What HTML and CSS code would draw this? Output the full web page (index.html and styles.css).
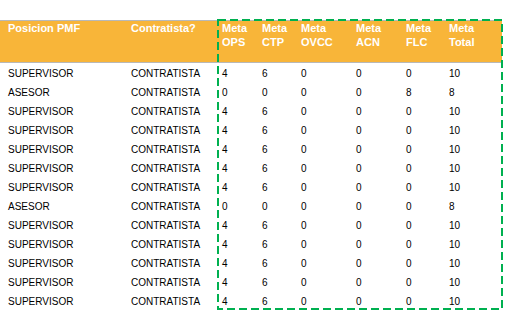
FILE: index.html
```html
<!DOCTYPE html>
<html>
<head>
<meta charset="utf-8">
<link rel="stylesheet" href="styles.css">
</head>
<body>
<div class="sheet">
  <div class="row head">
    <div>Posicion PMF</div>
    <div>Contratista?</div>
    <div>Meta<br>OPS</div>
    <div>Meta<br>CTP</div>
    <div>Meta<br>OVCC</div>
    <div>Meta<br>ACN</div>
    <div>Meta<br>FLC</div>
    <div>Meta<br>Total</div>
  </div>
  <div class="body">
    <div class="row"><div>SUPERVISOR</div><div>CONTRATISTA</div><div>4</div><div>6</div><div>0</div><div>0</div><div>0</div><div>10</div></div>
    <div class="row"><div>ASESOR</div><div>CONTRATISTA</div><div>0</div><div>0</div><div>0</div><div>0</div><div>8</div><div>8</div></div>
    <div class="row"><div>SUPERVISOR</div><div>CONTRATISTA</div><div>4</div><div>6</div><div>0</div><div>0</div><div>0</div><div>10</div></div>
    <div class="row"><div>SUPERVISOR</div><div>CONTRATISTA</div><div>4</div><div>6</div><div>0</div><div>0</div><div>0</div><div>10</div></div>
    <div class="row"><div>SUPERVISOR</div><div>CONTRATISTA</div><div>4</div><div>6</div><div>0</div><div>0</div><div>0</div><div>10</div></div>
    <div class="row"><div>SUPERVISOR</div><div>CONTRATISTA</div><div>4</div><div>6</div><div>0</div><div>0</div><div>0</div><div>10</div></div>
    <div class="row"><div>SUPERVISOR</div><div>CONTRATISTA</div><div>4</div><div>6</div><div>0</div><div>0</div><div>0</div><div>10</div></div>
    <div class="row"><div>ASESOR</div><div>CONTRATISTA</div><div>0</div><div>0</div><div>0</div><div>0</div><div>0</div><div>8</div></div>
    <div class="row"><div>SUPERVISOR</div><div>CONTRATISTA</div><div>4</div><div>6</div><div>0</div><div>0</div><div>0</div><div>10</div></div>
    <div class="row"><div>SUPERVISOR</div><div>CONTRATISTA</div><div>4</div><div>6</div><div>0</div><div>0</div><div>0</div><div>10</div></div>
    <div class="row"><div>SUPERVISOR</div><div>CONTRATISTA</div><div>4</div><div>6</div><div>0</div><div>0</div><div>0</div><div>10</div></div>
    <div class="row"><div>SUPERVISOR</div><div>CONTRATISTA</div><div>4</div><div>6</div><div>0</div><div>0</div><div>0</div><div>10</div></div>
    <div class="row"><div>SUPERVISOR</div><div>CONTRATISTA</div><div>4</div><div>6</div><div>0</div><div>0</div><div>0</div><div>10</div></div>
  </div>
  <svg class="highlight" width="286" height="291" viewBox="0 0 286 291">
    <rect x="1" y="1" width="284" height="289" fill="none" stroke="#00b050" stroke-width="2" stroke-dasharray="8 4"/>
  </svg>
</div>
</body>
</html>
```

FILE: styles.css
```css
html, body {
  margin: 0;
  padding: 0;
  background: #ffffff;
}
body {
  font-family: "Liberation Sans", Arial, sans-serif;
}
.sheet {
  position: relative;
  width: 505px;
  height: 313px;
  padding-top: 20px;
  box-sizing: border-box;
}
.row {
  display: grid;
  grid-template-columns: 123px 91px 40px 39px 55px 50px 43px 1fr;
  padding-left: 8px;
  width: 502px;
  box-sizing: border-box;
}
.head {
  background: #f8b539;
  color: #ffffff;
  font-weight: bold;
  font-size: 11px;
  line-height: 14px;
  height: 43px;
  border-top: 1px solid #b8b8b8;
  border-bottom: 1px solid #b8b8b8;
  box-sizing: border-box;
}
.body {
  padding-top: 1px;
}
.body .row {
  font-size: 10px;
  line-height: 19px;
  height: 19px;
  color: #000000;
}
.highlight {
  position: absolute;
  left: 217px;
  top: 19px;
}
```
